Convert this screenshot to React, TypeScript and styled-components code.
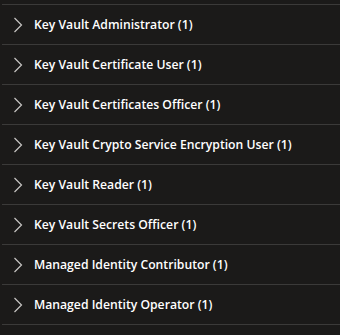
import React from 'react';
import styled, { createGlobalStyle } from 'styled-components';

const GlobalStyle = createGlobalStyle`
  html, body {
    margin: 0;
    padding: 0;
    background: #1b1a19;
  }
`;

const List = styled.div`
  width: 340px;
  height: 335px;
  box-sizing: border-box;
  padding: 4px 0 0 2px;
  background: #1b1a19;
  font-family: 'Open Sans', 'Liberation Sans', sans-serif;
`;

const Row = styled.div`
  display: flex;
  align-items: center;
  height: 39px;
  border-top: 1px solid #3b3a39;
  &:last-child {
    border-bottom: 1px solid #3b3a39;
  }
`;

const Chevron = styled.span`
  display: flex;
  align-items: center;
  justify-content: center;
  width: 20px;
  margin-left: 6px;
  margin-right: 6px;
  color: #c8c6c4;
`;

const Label = styled.span`
  color: #ffffff;
  font-size: 12.2px;
  font-weight: 600;
  white-space: nowrap;
  padding-bottom: 1px;
`;

const roles = [
  'Key Vault Administrator (1)',
  'Key Vault Certificate User (1)',
  'Key Vault Certificates Officer (1)',
  'Key Vault Crypto Service Encryption User (1)',
  'Key Vault Reader (1)',
  'Key Vault Secrets Officer (1)',
  'Managed Identity Contributor (1)',
  'Managed Identity Operator (1)',
];

const ChevronIcon = () => (
  <svg width="10" height="16" viewBox="0 0 10 16" fill="none">
    <path d="M1.5 1 L8.5 8 L1.5 15" stroke="currentColor" strokeWidth="1.2" />
  </svg>
);

const App: React.FC = () => (
  <>
    <GlobalStyle />
    <List>
      {roles.map(role => (
        <Row key={role}>
          <Chevron>
            <ChevronIcon />
          </Chevron>
          <Label>{role}</Label>
        </Row>
      ))}
    </List>
  </>
);

export default App;
